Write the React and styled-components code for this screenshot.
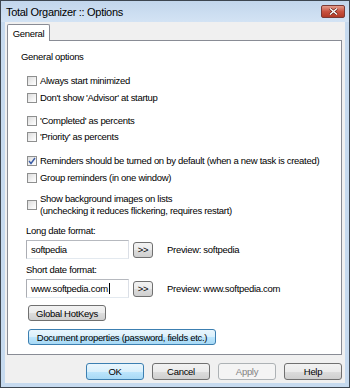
import styled, { createGlobalStyle } from "styled-components";

const GlobalStyle = createGlobalStyle`
  html, body {
    margin: 0;
    padding: 0;
    background: #ffffff;
  }
  body {
    font-family: "Liberation Sans", Arial, sans-serif;
    font-size: 9.5px;
    letter-spacing: -0.3px;
    color: #000;
  }
`;

const Window = styled.div`
  width: 350px;
  height: 388px;
  box-sizing: border-box;
  border: 1px solid #3d4650;
  background: #c6daef;
  display: flex;
  flex-direction: column;
`;

const TitleBar = styled.div`
  height: 21px;
  display: flex;
  align-items: center;
  justify-content: space-between;
  padding: 0 4px 0 5px;
  background: linear-gradient(#c2d6ec, #d3e3f4);
`;

const Title = styled.span`
  font-size: 11px;
  letter-spacing: -0.3px;
  color: #000;
`;

const CloseBtn = styled.div`
  width: 22px;
  height: 11px;
  border: 1px solid #7b3a35;
  border-radius: 2px;
  background: linear-gradient(#e39c8c, #c9523f 50%, #b23a26);
  display: flex;
  align-items: center;
  justify-content: center;
`;

const Client = styled.div`
  flex: 1;
  margin: 0 4px 4px;
  background: #f0f0f0;
  display: flex;
  flex-direction: column;
  padding: 2px 3px 0 2px;
`;

const TabStrip = styled.div`
  display: flex;
  height: 16px;
  position: relative;
  z-index: 1;
`;

const Tab = styled.div`
  width: 43px;
  height: 17px;
  box-sizing: border-box;
  border: 1px solid #898c95;
  border-bottom: none;
  background: #fff;
  display: flex;
  align-items: center;
  justify-content: center;
  border-radius: 2px 2px 0 0;
`;

const Panel = styled.div`
  height: 315px;
  box-sizing: border-box;
  border: 1px solid #898c95;
  background: #fff;
  padding: 9px 0 0 13px;
  display: flex;
  flex-direction: column;
  align-items: flex-start;
`;

const Heading = styled.div`
  line-height: 13px;
`;

const CheckRow = styled.label`
  display: flex;
  align-items: center;
  margin-left: 6px;
  margin-top: ${(p) => p.$top || 0}px;
  min-height: ${(p) => p.$h || 17}px;
  white-space: nowrap;
`;

const Box = styled.span`
  width: 10px;
  height: 10px;
  box-sizing: border-box;
  border: 1px solid #8e8f8f;
  background: linear-gradient(135deg, #dcdcdc, #f6f6f6 70%, #ffffff);
  margin-right: 3px;
  flex-shrink: 0;
  display: flex;
  align-items: center;
  justify-content: center;
`;

const CheckText = styled.span`
  line-height: 12px;
`;

const FieldLabel = styled.div`
  margin-left: 5px;
  margin-top: ${(p) => p.$top || 0}px;
  line-height: 14px;
`;

const FieldRow = styled.div`
  display: flex;
  align-items: center;
  margin-left: 5px;
  margin-top: 2px;
  height: 19px;
`;

const Input = styled.div`
  width: 103px;
  height: 19px;
  box-sizing: border-box;
  border: 1px solid #abadb3;
  border-top-color: #b6b9bf;
  border-right-color: #dbdfe6;
  border-bottom-color: #e3e9ef;
  padding: 0 4px;
  display: flex;
  align-items: center;
  background: #fff;
`;

const Caret = styled.span`
  width: 1px;
  height: 11px;
  background: #000;
  margin-left: 1px;
`;

const Button = styled.div`
  box-sizing: border-box;
  height: ${(p) => p.$h || 16}px;
  width: ${(p) => p.$w}px;
  border: 1px solid ${(p) => (p.$disabled ? "#adb2b5" : p.$default ? "#3c7fb1" : "#707070")};
  border-radius: 3px;
  background: ${(p) =>
    p.$disabled
      ? "#f4f4f4"
      : p.$default
      ? "linear-gradient(#eaf6fd, #d9f0fc 50%, #bee6fd 50%, #a7d9f5)"
      : "linear-gradient(#f2f2f2, #ebebeb 50%, #dddddd 50%, #cfcfcf)"};
  color: ${(p) => (p.$disabled ? "#838383" : "#000")};
  display: flex;
  align-items: center;
  justify-content: center;
  margin-left: ${(p) => p.$ml || 0}px;
  margin-top: ${(p) => p.$top || 0}px;
  white-space: nowrap;
  flex-shrink: 0;
`;

const Preview = styled.span`
  margin-left: 14px;
`;

const Footer = styled.div`
  display: flex;
  justify-content: flex-end;
  gap: 8px;
  padding-top: 8px;
`;

function Check({ checked }) {
  return (
    <Box>
      {checked && (
        <svg width="8" height="8" viewBox="0 0 8 8">
          <path d="M1 4 L3 6.5 L7 1" fill="none" stroke="#3a5ca6" strokeWidth="1.4" />
        </svg>
      )}
    </Box>
  );
}

function Option({ top, h, checked, children }) {
  return (
    <CheckRow $top={top} $h={h}>
      <Check checked={checked} />
      <CheckText>{children}</CheckText>
    </CheckRow>
  );
}

export default function App() {
  return (
    <>
      <GlobalStyle />
      <Window>
        <TitleBar>
          <Title>Total Organizer :: Options</Title>
          <CloseBtn>
            <svg width="9" height="7" viewBox="0 0 9 7">
              <path d="M1 0.5 L8 6.5 M8 0.5 L1 6.5" stroke="#5a1b12" strokeWidth="2.6" />
              <path d="M1 0.5 L8 6.5 M8 0.5 L1 6.5" stroke="#fff" strokeWidth="1.4" />
            </svg>
          </CloseBtn>
        </TitleBar>
        <Client>
          <TabStrip>
            <Tab>General</Tab>
          </TabStrip>
          <Panel>
            <Heading>General options</Heading>
            <Option top={9}>Always start minimized</Option>
            <Option>Don't show 'Advisor' at startup</Option>
            <Option top={7} h={16}>'Completed' as percents</Option>
            <Option h={16}>'Priority' as percents</Option>
            <Option top={7} checked>
              Reminders should be turned on by default (when a new task is created)
            </Option>
            <Option>Group reminders (in one window)</Option>
            <Option top={7}>
              Show background images on lists
              <br />
              (unchecking it reduces flickering, requires restart)
            </Option>
            <FieldLabel $top={7}>Long date format:</FieldLabel>
            <FieldRow>
              <Input>softpedia</Input>
              <Button $w={20} $ml={4}>&gt;&gt;</Button>
              <Preview>Preview: softpedia</Preview>
            </FieldRow>
            <FieldLabel $top={4}>Short date format:</FieldLabel>
            <FieldRow>
              <Input>
                www.softpedia.com
                <Caret />
              </Input>
              <Button $w={20} $ml={4}>&gt;&gt;</Button>
              <Preview>Preview: www.softpedia.com</Preview>
            </FieldRow>
            <Button $w={78} $ml={7} $top={7}>Global HotKeys</Button>
            <Button $w={188} $ml={7} $top={8} $default>
              Document properties (password, fields etc.)
            </Button>
          </Panel>
          <Footer>
            <Button $w={58} $h={17} $default>OK</Button>
            <Button $w={58} $h={17}>Cancel</Button>
            <Button $w={58} $h={17} $disabled>Apply</Button>
            <Button $w={58} $h={17}>Help</Button>
          </Footer>
        </Client>
      </Window>
    </>
  );
}
